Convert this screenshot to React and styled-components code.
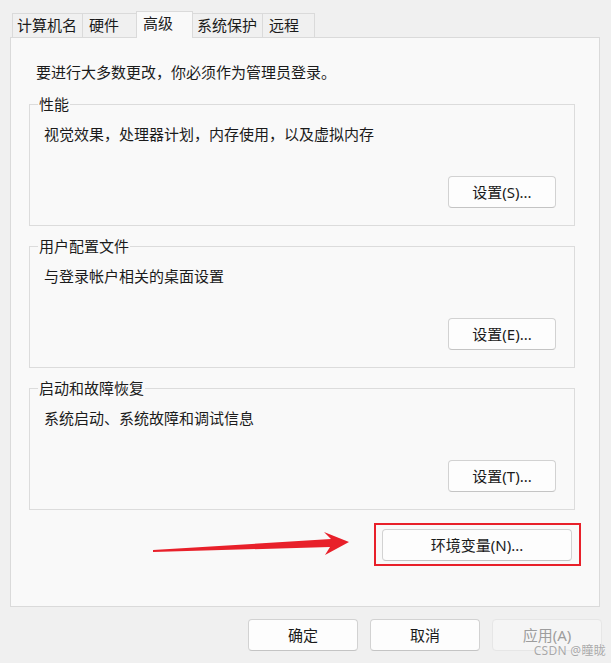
import React from 'react'
import styled, { createGlobalStyle, css } from 'styled-components'

const GlobalStyle = createGlobalStyle`
  html, body {
    margin: 0;
    padding: 0;
    background: #f0f0f0;
  }
  * {
    box-sizing: border-box;
  }
`

const Window = styled.div`
  position: relative;
  width: 611px;
  height: 663px;
  padding-top: 11px;
  background: #f0f0f0;
  color: #1b1b1b;
  font-family: "Noto Sans", "Noto Sans CJK SC", sans-serif;
  font-size: 15px;
  line-height: 20px;
  overflow: hidden;
`

const TabStrip = styled.div`
  display: flex;
  align-items: flex-end;
  height: 26px;
  margin-left: 12px;
`

const Tab = styled.div`
  height: 24px;
  width: ${ ({ w }) => w }px;
  margin-left: -1px;
  padding-left: ${ ({ pl }) => pl }px;
  border: 1px solid #dadada;
  border-bottom: none;
  background: #f0f0f0;
  line-height: 23px;
  white-space: nowrap;
  &:first-child {
    margin-left: 0;
  }
  ${
    ({ active }) => active && css`
      position: relative;
      z-index: 1;
      height: 27px;
      margin-bottom: -1px;
      background: #f9f9f9;
      line-height: 22px;
    `
  }
`

const Panel = styled.div`
  width: 590px;
  height: 570px;
  margin-left: 10px;
  padding: 0 24px 0 18px;
  border: 1px solid #dadada;
  background: #f9f9f9;
`

const Notice = styled.p`
  margin: 24px 0 0;
  padding-left: 7px;
`

const Group = styled.fieldset`
  margin: ${ ({ first }) => first ? 12 : 10 }px 0 0;
  padding: 10px 18px 17px 8px;
  min-width: 0;
  border: 1px solid #dcdcdc;
`

const GroupTitle = styled.legend`
  padding: 0 1px;
  line-height: 20px;
`

const GroupText = styled.div`
  padding-left: 6px;
`

const ButtonRow = styled.div`
  display: flex;
  justify-content: flex-end;
  margin-top: ${ ({ top }) => top || 0 }px;
`

const Button = styled.button`
  width: ${ ({ w }) => w }px;
  height: 32px;
  padding: 0;
  border: 1px solid #d2d2d2;
  border-bottom-color: #c4c4c4;
  border-radius: 4px;
  background: #fdfdfd;
  color: #1b1b1b;
  font-family: inherit;
  font-size: 15px;
  line-height: 20px;
  ${
    ({ disabled }) => disabled && css`
      border-color: #e6e6e6;
      background: #f5f5f5;
      color: #9d9d9d;
    `
  }
`

const EnvRow = styled.div`
  position: relative;
  display: flex;
  justify-content: flex-end;
  margin: 13px -6px 0 0;
`

const Highlight = styled.div`
  padding: 4px 7px 3px 6px;
  border: 2px solid #e8202a;
`

const Arrow = styled.svg`
  position: absolute;
  left: 120px;
  top: 4px;
`

const Footer = styled.div`
  display: flex;
  justify-content: flex-end;
  gap: 12px;
  margin: 12px 9px 0 0;
`

const Watermark = styled.div`
  position: absolute;
  right: 5px;
  bottom: 5px;
  font-size: 12px;
  line-height: 14px;
  color: #a8a8a8;
  text-shadow: 0 0 1px #ffffff;
  letter-spacing: 0.3px;
`

const tabs = [
  { label: '计算机名', w: 71, pl: 4 },
  { label: '硬件', w: 55, pl: 6 },
  { label: '高级', w: 57, pl: 6, active: true },
  { label: '系统保护', w: 71, pl: 4 },
  { label: '远程', w: 53, pl: 6 }
]

const groups = [
  { title: '性能', text: '视觉效果，处理器计划，内存使用，以及虚拟内存', button: '设置(S)...' },
  { title: '用户配置文件', text: '与登录帐户相关的桌面设置', button: '设置(E)...' },
  { title: '启动和故障恢复', text: '系统启动、系统故障和调试信息', button: '设置(T)...' }
]

const App = () => (
  <Window>
    <GlobalStyle />
    <TabStrip>
      {
        tabs.map((tab) => (
          <Tab key={ tab.label } w={ tab.w } pl={ tab.pl } active={ tab.active }>
            { tab.label }
          </Tab>
        ))
      }
    </TabStrip>
    <Panel>
      <Notice>要进行大多数更改，你必须作为管理员登录。</Notice>
      {
        groups.map((group, i) => (
          <Group key={ group.title } first={ i === 0 }>
            <GroupTitle>{ group.title }</GroupTitle>
            <GroupText>{ group.text }</GroupText>
            <ButtonRow top={ 32 }>
              <Button w={ 108 }>{ group.button }</Button>
            </ButtonRow>
          </Group>
        ))
      }
      <EnvRow>
        <Arrow width="204" height="32" viewBox="0 0 204 32">
          <polygon
            points="4,23 182,12 175,5 200,15 176,28 181,20 4,25"
            fill="#e8202a"
          />
        </Arrow>
        <Highlight>
          <Button w={ 190 }>环境变量(N)...</Button>
        </Highlight>
      </EnvRow>
    </Panel>
    <Footer>
      <Button w={ 110 }>确定</Button>
      <Button w={ 110 }>取消</Button>
      <Button w={ 110 } disabled>应用(A)</Button>
    </Footer>
    <Watermark>CSDN @瞳眬</Watermark>
  </Window>
)

export default App
